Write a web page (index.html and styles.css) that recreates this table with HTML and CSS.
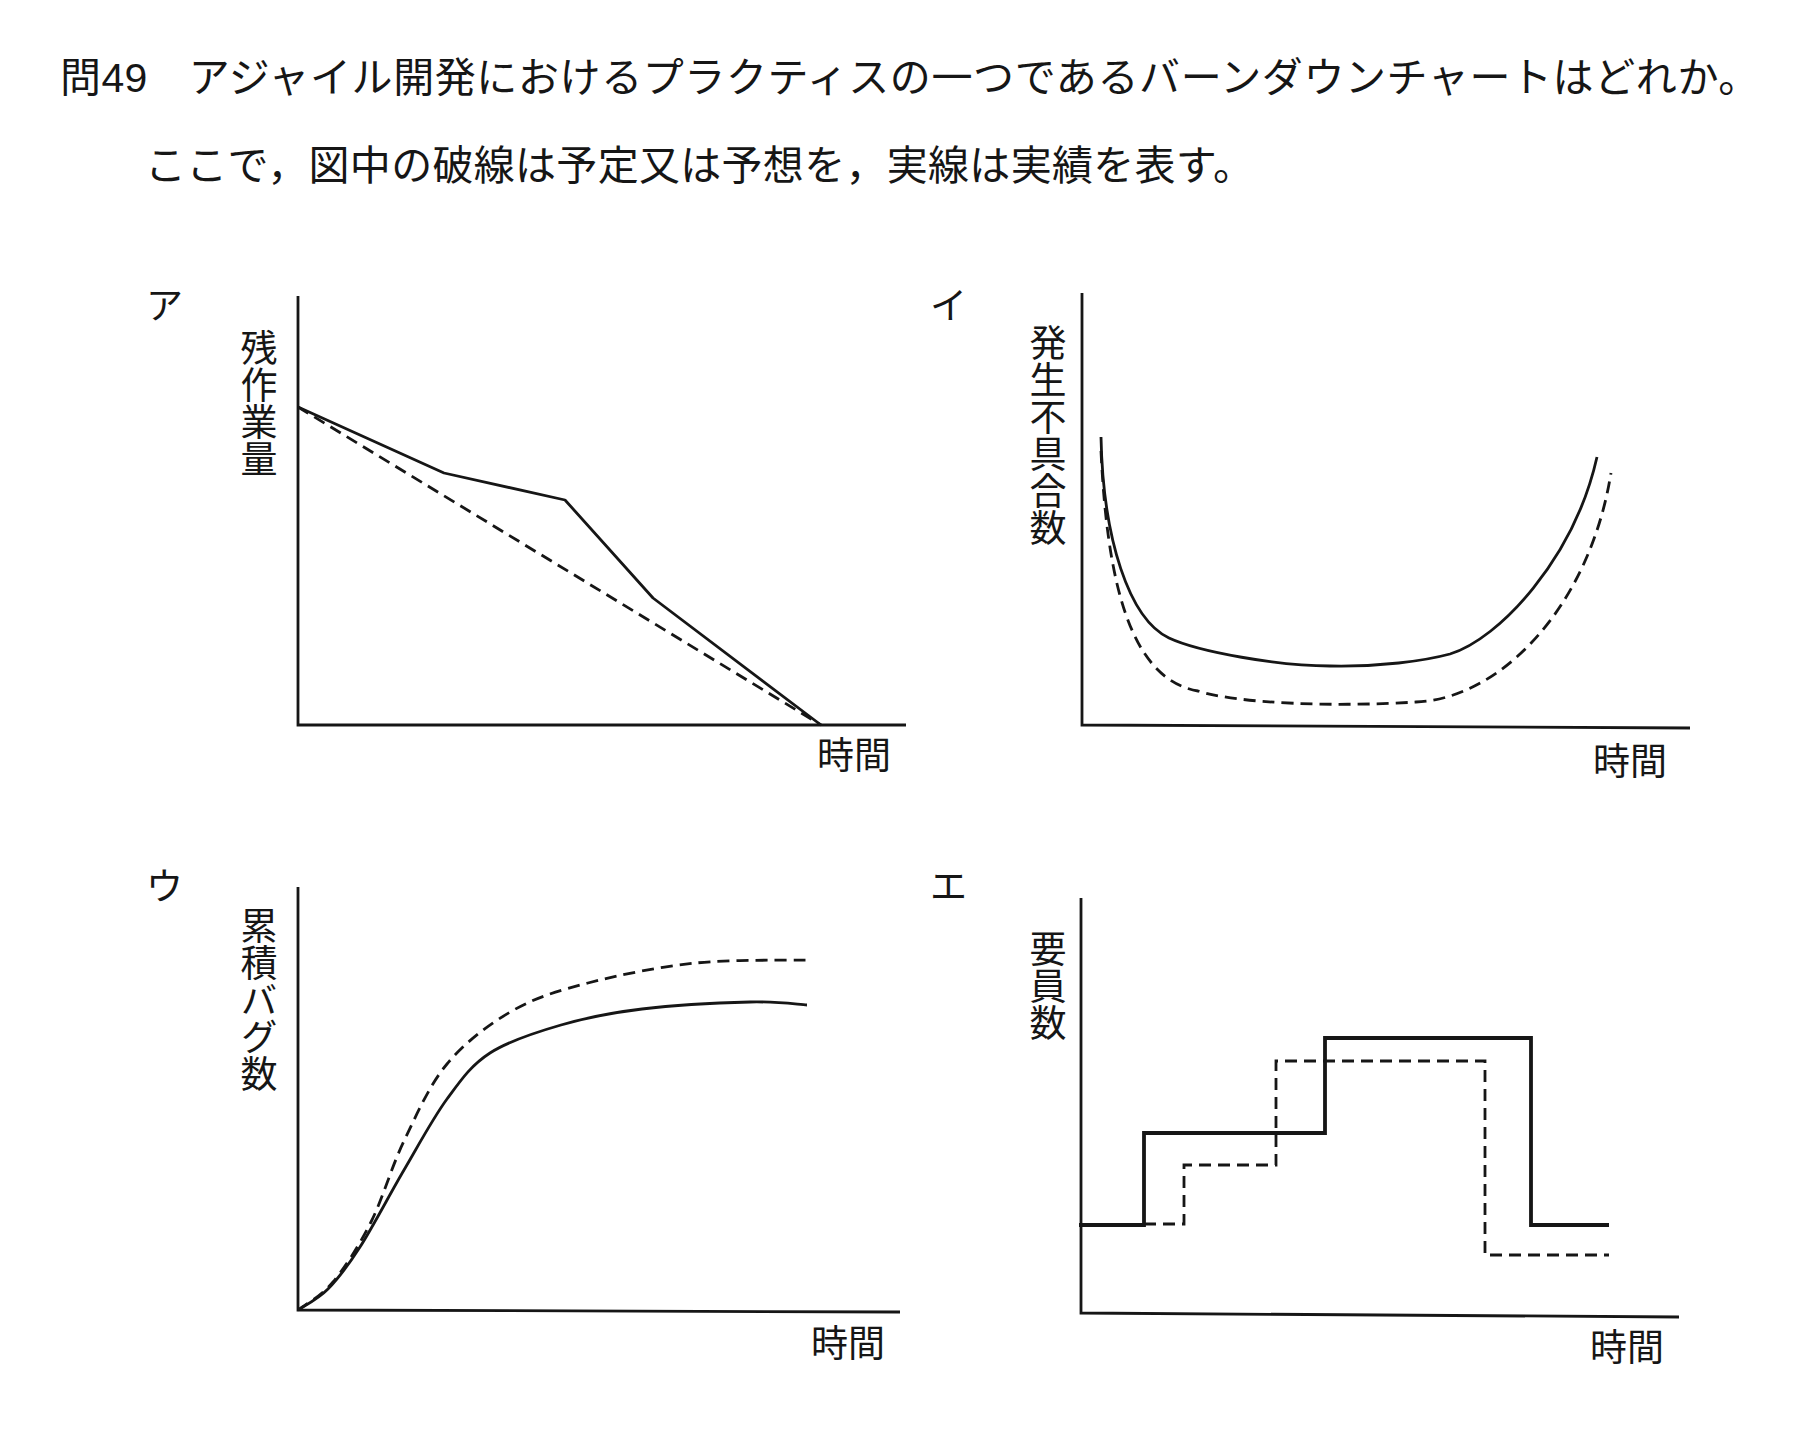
FILE: index.html
```html
<!DOCTYPE html>
<html lang="ja">
<head>
<meta charset="utf-8">
<title>問49</title>
<link rel="stylesheet" href="styles.css">
</head>
<body>
<div class="page">
  <header class="question">
    <p class="q-line first">問<span class="num">49</span>　アジャイル開発におけるプラクティスの一つであるバーンダウンチャートはどれか。</p>
    <p class="q-line indent">ここで，図中の破線は予定又は予想を，実線は実績を表す。</p>
  </header>

  <section class="charts">
    <!-- ア -->
    <div class="chart">
      <div class="opt">ア</div>
      <div class="ylabel yl-a">残作業量</div>
      <svg class="plot" width="620" height="448" viewBox="0 0 620 448">
        <path class="axis" d="M2,7 V436 H610"/>
        <path class="solid" d="M2,118 L148,184 L269,211 L357,309 L525,436"/>
        <path class="dash" d="M2,118 L525,436"/>
      </svg>
      <div class="xlabel xl-a">時間</div>
    </div>

    <!-- イ -->
    <div class="chart right">
      <div class="opt">イ</div>
      <div class="ylabel yl-i">発生不具合数</div>
      <svg class="plot" width="620" height="448" viewBox="0 0 620 448">
        <path class="axis" d="M3,4 V436 L611,439"/>
        <path class="solid" d="M22,148 C24,250 50,330 90,349 C120,363 200,377 251,377 C300,378 345,372 371,365 C420,350 495,270 518,168"/>
        <path class="dash" d="M22,162 C28,290 50,390 119,402 C160,415 260,418 337,413 C420,410 510,320 532,184"/>
      </svg>
      <div class="xlabel xl-i">時間</div>
    </div>

    <!-- ウ -->
    <div class="chart">
      <div class="opt">ウ</div>
      <div class="ylabel yl-u">累積バグ数</div>
      <svg class="plot" width="620" height="448" viewBox="0 0 620 448">
        <path class="axis" d="M2,17 V440 L604,442"/>
        <path class="solid" d="M2,440 C7,436.5 21.7,429.5 32,419 C42.3,408.5 51.3,396.8 64,377 C76.7,357.2 93.5,324.7 108,300 C122.5,275.3 136.7,248.5 151,229 C165.3,209.5 175,195.3 194,183 C213,170.7 239.7,162.3 265,155 C290.3,147.7 314.5,142.8 346,139 C377.5,135.2 426.5,132.7 454,132 C481.5,131.3 501.5,134.5 511,135"/>
        <path class="dash" d="M2,440 C7.8,435.3 24.8,426.7 37,412 C49.2,397.3 63.2,375.5 75,352 C86.8,328.5 95.3,297.3 108,271 C120.7,244.7 133,215.7 151,194 C169,172.3 192.5,154.5 216,141 C239.5,127.5 261.3,121 292,113 C322.7,105 363,96.8 400,93 C437,89.2 495,90.5 514,90"/>
      </svg>
      <div class="xlabel xl-u">時間</div>
    </div>

    <!-- エ -->
    <div class="chart right">
      <div class="opt">エ</div>
      <div class="ylabel yl-e">要員数</div>
      <svg class="plot" width="620" height="448" viewBox="0 0 620 448">
        <path class="axis" d="M2,28 V443 L600,447"/>
        <path class="solid thick" d="M0,355 H65 V263 H246 V168 H452 V355 H530"/>
        <path class="dash" d="M65,354 H105 V295 H197 V191 H406 V385 H530"/>
      </svg>
      <div class="xlabel xl-e">時間</div>
    </div>
  </section>
</div>
</body>
</html>
```

FILE: styles.css
```css
html, body {
  margin: 0;
  padding: 0;
  background: #ffffff;
}

body {
  color: #161616;
  font-family: "Noto Sans CJK JP", "Noto Sans", sans-serif;
}

.page {
  width: 1799px;
  min-height: 1448px;
}

/* question text */
.question {
  padding: 32px 0 0 60px;
}

.q-line {
  margin: 0;
  font-size: 41px;
  line-height: 84px;
  letter-spacing: 0.3px;
  white-space: nowrap;
}

.q-line.first {
  letter-spacing: 0.6px;
}

.q-line.indent {
  padding-left: 85px;
}

.num {
  font-family: "Liberation Sans", Arial, sans-serif;
  letter-spacing: 0;
}

/* charts */
.charts {
  display: grid;
  grid-template-columns: 784px 1fr;
  grid-template-rows: 581px auto;
  margin-top: 81px;
  padding-left: 146px;
}

.chart {
  display: grid;
  grid-template-columns: 94px 56px 620px;
  grid-template-rows: auto auto;
  align-items: start;
  align-content: start;
}

.chart.right {
  grid-template-columns: 99px 50px 620px;
}

.opt {
  grid-column: 1;
  grid-row: 1;
  font-size: 37px;
  line-height: 37px;
}

.ylabel {
  grid-column: 2;
  grid-row: 1;
  writing-mode: vertical-rl;
  font-size: 37px;
  line-height: 37px;
  width: 37px;
}

.yl-a { margin-top: 44px; }
.yl-i { margin-top: 39px; }
.yl-u { margin-top: 41px; }
.yl-e { margin-top: 64px; }

.plot {
  grid-column: 3;
  grid-row: 1;
  display: block;
  margin-top: 4px;
  overflow: visible;
}

.xlabel {
  grid-column: 3;
  grid-row: 2;
  justify-self: end;
  font-size: 37px;
  line-height: 37px;
}

.xl-a { margin-top: -2px; margin-right: 25px; }
.xl-i { margin-top: 4px; margin-right: 32px; }
.xl-u { margin-top: 5px; margin-right: 31px; }
.xl-e { margin-top: 9px; margin-right: 35px; }

/* plot strokes */
.axis {
  fill: none;
  stroke: #161616;
  stroke-width: 2.8;
  stroke-linejoin: miter;
}

.solid {
  fill: none;
  stroke: #161616;
  stroke-width: 2.8;
  stroke-linejoin: round;
}

.solid.thick {
  stroke-width: 3.8;
  stroke-linejoin: miter;
}

.dash {
  fill: none;
  stroke: #161616;
  stroke-width: 2.8;
  stroke-dasharray: 12 7;
}
```
